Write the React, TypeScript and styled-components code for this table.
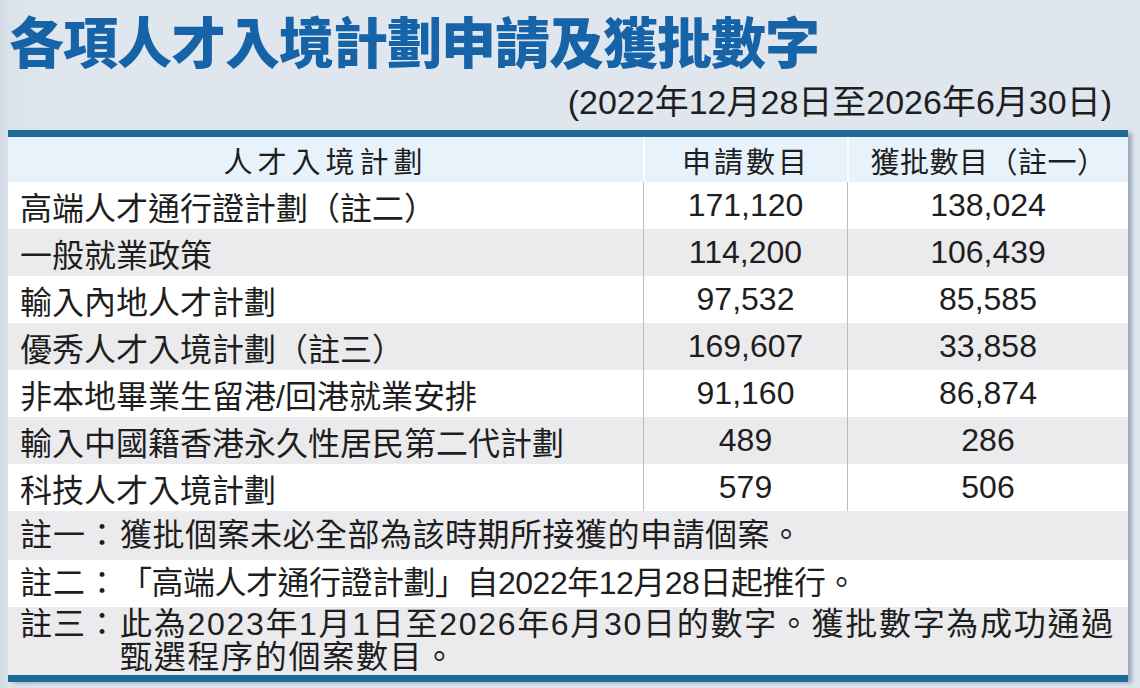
import styled, { createGlobalStyle } from "styled-components"

const GlobalStyle = createGlobalStyle`
	html, body {
		margin: 0;
		padding: 0;
		background: #dee5ec;
	}
	body {
		font-family: "Liberation Sans", "Noto Sans CJK TC", sans-serif;
		color: #222;
	}
`

type Scheme = {
	name: string,
	applied: string,
	approved: string
}

const schemes: Scheme[] = [
	{ name: "高端人才通行證計劃（註二）", applied: "171,120", approved: "138,024" },
	{ name: "一般就業政策", applied: "114,200", approved: "106,439" },
	{ name: "輸入內地人才計劃", applied: "97,532", approved: "85,585" },
	{ name: "優秀人才入境計劃（註三）", applied: "169,607", approved: "33,858" },
	{ name: "非本地畢業生留港/回港就業安排", applied: "91,160", approved: "86,874" },
	{ name: "輸入中國籍香港永久性居民第二代計劃", applied: "489", approved: "286" },
	{ name: "科技人才入境計劃", applied: "579", approved: "506" }
]

type Note = {
	label: string,
	lines: string[],
	height: number,
	spacing: number,
	shaded: boolean
}

const notes: Note[] = [
	{
		label: "註一：",
		lines: ["獲批個案未必全部為該時期所接獲的申請個案。"],
		height: 49,
		spacing: 0.5,
		shaded: true
	},
	{
		label: "註二：",
		lines: ["「高端人才通行證計劃」自2022年12月28日起推行。"],
		height: 47,
		spacing: -0.5,
		shaded: false
	},
	{
		label: "註三：",
		lines: [
			"此為2023年1月1日至2026年6月30日的數字。獲批數字為成功通過",
			"甄選程序的個案數目。"
		],
		height: 68,
		spacing: 1.7,
		shaded: true
	}
]

export default function App() {
	return (
		<Page>
			<GlobalStyle />
			<Title>各項人才入境計劃申請及獲批數字</Title>
			<Subtitle>(2022年12月28日至2026年6月30日)</Subtitle>
			<Table>
				<HeaderRow>
					<HeaderCell $spacing={5}>人才入境計劃</HeaderCell>
					<HeaderCell $spacing={3} $divided>申請數目</HeaderCell>
					<HeaderCell $spacing={0.5} $divided>獲批數目（註一）</HeaderCell>
				</HeaderRow>
				{schemes.map((s, i) => (
					<Row key={s.name} $shaded={i % 2 === 1}>
						<NameCell>{s.name}</NameCell>
						<NumberCell>{s.applied}</NumberCell>
						<NumberCell>{s.approved}</NumberCell>
					</Row>
				))}
				{notes.map(n => (
					<NoteRow key={n.label} $height={n.height} $shaded={n.shaded}>
						<NoteContent>
							<NoteLabel>{n.label}</NoteLabel>
							<NoteBody $spacing={n.spacing}>
								{n.lines.map(line => <div key={line}>{line}</div>)}
							</NoteBody>
						</NoteContent>
					</NoteRow>
				))}
			</Table>
		</Page>
	)
}

const Page = styled.div`
	width: 1140px;
	height: 688px;
	overflow: hidden;
	background: linear-gradient(to right, #d4dde6 0px, #d9e1e9 8px, #dfe6ed 40px);
`

const Title = styled.h1`
	margin: 0;
	padding: 7px 0 0 9px;
	font-family: "Noto Sans CJK TC", sans-serif;
	font-weight: 900;
	font-size: 55px;
	line-height: 64px;
	letter-spacing: -1px;
	color: #1663a8;
	white-space: nowrap;
`

const Subtitle = styled.div`
	margin-top: 11px;
	padding-right: 28px;
	font-size: 34px;
	line-height: 40px;
	text-align: right;
	white-space: nowrap;
	color: #1e1e1e;
`

const Table = styled.div`
	margin: 8px 12px 0 8px;
	border-top: 7px solid #1e6c95;
	border-bottom: 7px solid #1e6c95;
	box-shadow: 5px 2px 4px -1px rgba(70, 95, 125, 0.45);
	background: #fff;
`

const columns = "635px 204px 1fr"

const HeaderRow = styled.div`
	display: grid;
	grid-template-columns: ${columns};
	height: 45px;
	background: #e7f2fb;
`

const HeaderCell = styled.div<{ $spacing: number, $divided?: boolean }>`
	display: flex;
	align-items: center;
	justify-content: center;
	font-size: 29px;
	letter-spacing: ${({ $spacing }) => $spacing}px;
	border-left: ${({ $divided }) => $divided ? "2px solid rgba(255, 255, 255, 0.85)" : "none"};
	color: #1e1e1e;
	white-space: nowrap;
`

const Row = styled.div<{ $shaded: boolean }>`
	display: grid;
	grid-template-columns: ${columns};
	height: 47px;
	background: ${({ $shaded }) => $shaded ? "#ebebed" : "#ffffff"};
	font-size: 32px;
	color: #1e1e1e;
`

const NameCell = styled.div`
	display: flex;
	align-items: center;
	padding-left: 12px;
	white-space: nowrap;
`

const NumberCell = styled.div`
	display: flex;
	align-items: center;
	justify-content: center;
	border-left: 1.5px solid #bdbdbf;
	white-space: nowrap;
`

const NoteRow = styled.div<{ $height: number, $shaded: boolean }>`
	display: flex;
	align-items: center;
	height: ${({ $height }) => $height}px;
	padding-left: 12px;
	background: ${({ $shaded }) => $shaded ? "#ebebed" : "#ffffff"};
	font-size: 32px;
	line-height: 33px;
	color: #1e1e1e;
`

const NoteContent = styled.div`
	display: flex;
	align-items: flex-start;
`

const NoteLabel = styled.div`
	flex: 0 0 100px;
	letter-spacing: 1px;
	white-space: nowrap;
`

const NoteBody = styled.div<{ $spacing: number }>`
	letter-spacing: ${({ $spacing }) => $spacing}px;
	white-space: nowrap;
`
